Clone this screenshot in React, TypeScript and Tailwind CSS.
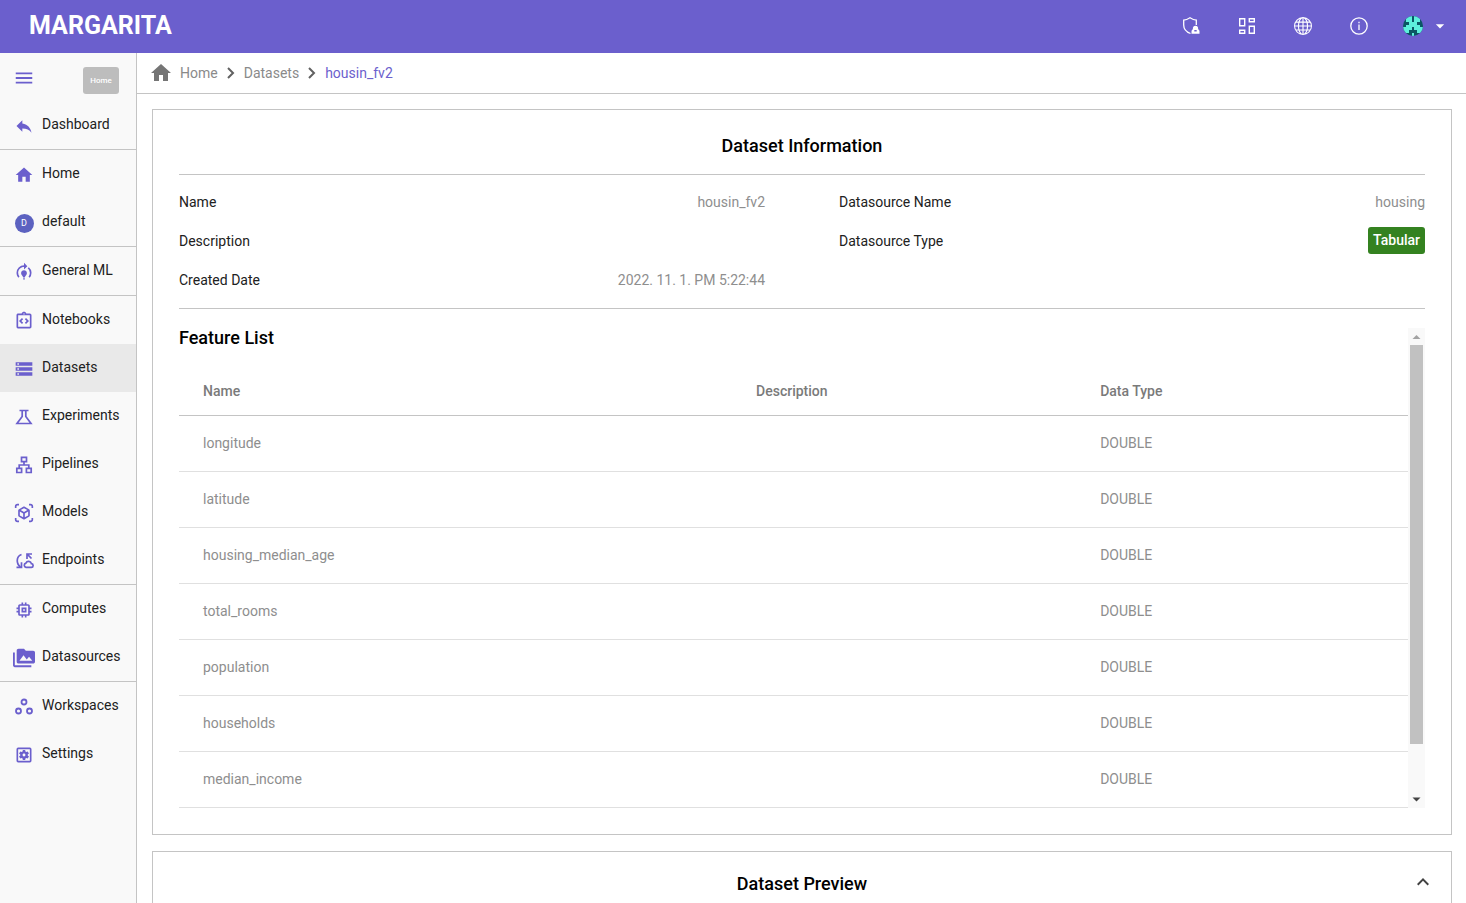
import React from 'react';
import {
  MdHome,
  MdKeyboardArrowUp,
  MdMemory,
  MdMenu,
  MdModelTraining,
  MdOutlineIntegrationInstructions,
  MdOutlineSettingsApplications,
  MdOutlineViewInAr,
  MdPermMedia,
  MdReply,
  MdStorage,
  MdArrowDropDown,
} from 'react-icons/md';
import { BsGlobe } from 'react-icons/bs';

type NavItem = {
  label: string;
  icon: React.ReactNode;
  active?: boolean;
};

const features = [
  'longitude',
  'latitude',
  'housing_median_age',
  'total_rooms',
  'population',
  'households',
  'median_income',
];

function ShieldUserIcon() {
  return (
    <svg viewBox="0 0 20 20" className="w-5 h-5" fill="none" stroke="currentColor" strokeWidth="1.3">
      <path d="M9.500 17.500C5.500 16 2.700 12.800 2.700 9V4.200C5 4 7 3 9 1.700c2 1.300 4 2.300 6.300 2.500V9" />
      <path
        d="M14.500 9.700a2.700 2.700 0 0 1 2.500 3.600c1 .4 1.500 1.200 1.500 2.200v2.200h-8v-2.200c0-1 .5-1.800 1.500-2.200a2.700 2.700 0 0 1 2.500-3.600Z"
        fill="currentColor"
        stroke="none"
      />
      <path d="M13.300 14h2.400v1.500h-2.400z" fill="#6b5fcd" stroke="none" />
    </svg>
  );
}

function DashboardIcon() {
  return (
    <svg viewBox="0 0 18 18" className="w-[18px] h-[18px]" fill="none" stroke="currentColor" strokeWidth="1.400">
      <path d="M1.700 1.700h5v7h-5zM11.300 1.700h5v3h-5zM1.700 13.300h5v3h-5zM11.300 9.300h5v7h-5z" />
    </svg>
  );
}

function InfoIcon() {
  return (
    <svg viewBox="0 0 18 18" className="w-[18px] h-[18px]" fill="none" stroke="currentColor" strokeWidth="1.300">
      <circle cx="9" cy="9" r="8.200" />
      <path d="M9 7.500V13M9 4.800v1.400" />
    </svg>
  );
}

const avatarRows = ['0110110', '0110110', '0011100', '0111110', '1110111', '1100011', '0001000'];

function Avatar() {
  return (
    <svg viewBox="0 0 7 7" className="w-5 h-5 rounded-full bg-[#0b5664]" shapeRendering="crispEdges">
      {avatarRows.map((row, y) =>
        row.split('').map((cell, x) =>
          cell === '1' ? <rect key={`${x}-${y}`} x={x} y={y} width="1" height="1" fill="#5df0dc" /> : null
        )
      )}
    </svg>
  );
}

function FlaskIcon() {
  return (
    <svg viewBox="0 0 20 20" className="w-5 h-5" fill="none" stroke="currentColor" strokeWidth="1.700">
      <path d="M5.500 3.500h9M8.200 3.500v6L3 16.500h14l-5.200-7v-6" />
    </svg>
  );
}

function SitemapIcon() {
  return (
    <svg viewBox="0 0 20 20" className="w-5 h-5" fill="none" stroke="currentColor" strokeWidth="1.700">
      <path d="M7.500 2.300h5v4.400h-5zM2.800 13.300h4.800v4.200H2.800zM12.400 13.300h4.800v4.200h-4.800z" />
      <path d="M10 6.700V10M5.200 13.300V10h9.600v3.300" />
    </svg>
  );
}

function WorkspacesIcon() {
  return (
    <svg viewBox="0 0 20 20" className="w-5 h-5" fill="none" stroke="currentColor" strokeWidth="1.800">
      <circle cx="10" cy="5" r="2.500" />
      <circle cx="4.500" cy="14" r="2.500" />
      <circle cx="15.500" cy="14" r="2.500" />
    </svg>
  );
}

function EndpointIcon() {
  return (
    <svg viewBox="0 0 20 20" className="w-5 h-5" fill="none" stroke="currentColor" strokeWidth="1.700">
      <path d="M7.500 3.500C2 5.500 2 12.500 6.500 16" />
      <path d="M2.500 16.300h5v-5" />
      <path d="M18 3h-5v5M13.200 3.200l4.300 4.300" />
      <path d="M12 16.300h5.200a1.800 1.800 0 0 0 .2-3.600 2.900 2.900 0 0 0-5.500-.6 2.150 2.150 0 0 0 .1 4.200Z" />
    </svg>
  );
}

function Separator() {
  return (
    <svg viewBox="0 0 12 12" className="w-3 h-3 mx-[7px]" fill="none" stroke="#616161" strokeWidth="2">
      <path d="M3 1l5 5-5 5" />
    </svg>
  );
}

const navGroups: NavItem[][] = [
  [{ label: 'Dashboard', icon: <MdReply size={20} /> }],
  [
    { label: 'Home', icon: <MdHome size={20} /> },
    {
      label: 'default',
      icon: (
        <span className="w-[19px] h-[19px] rounded-full bg-[#5c62c0] text-white text-[9px] flex items-center justify-center">
          D
        </span>
      ),
    },
  ],
  [{ label: 'General ML', icon: <MdModelTraining size={20} /> }],
  [
    { label: 'Notebooks', icon: <MdOutlineIntegrationInstructions size={20} /> },
    { label: 'Datasets', icon: <MdStorage size={20} />, active: true },
    { label: 'Experiments', icon: <FlaskIcon /> },
    { label: 'Pipelines', icon: <SitemapIcon /> },
    { label: 'Models', icon: <MdOutlineViewInAr size={20} /> },
    { label: 'Endpoints', icon: <EndpointIcon /> },
  ],
  [
    { label: 'Computes', icon: <MdMemory size={20} /> },
    { label: 'Datasources', icon: <MdPermMedia size={22} /> },
  ],
  [
    { label: 'Workspaces', icon: <WorkspacesIcon /> },
    { label: 'Settings', icon: <MdOutlineSettingsApplications size={20} /> },
  ],
];

function Header() {
  return (
    <header className="h-[53px] shrink-0 bg-[#6b5fcd] text-white flex items-center justify-between pl-[29px] pr-4 pb-0.5">
      <h1 className="text-[25px] leading-8 font-bold">MARGARITA</h1>
      <div className="flex items-center gap-9">
        <button aria-label="Admin" className="w-5 flex justify-center"><ShieldUserIcon /></button>
        <button aria-label="Apps" className="w-5 flex justify-center"><DashboardIcon /></button>
        <button aria-label="Language" className="w-5 flex justify-center"><BsGlobe size={18} /></button>
        <button aria-label="Information" className="w-5 flex justify-center"><InfoIcon /></button>
        <button aria-label="Account" className="flex items-center gap-[7px] -ml-0.5">
          <Avatar />
          <MdArrowDropDown size={20} />
        </button>
      </div>
    </header>
  );
}

function Sidebar() {
  return (
    <aside className="w-[137px] shrink-0 bg-[#f9f9f9] border-r border-[#c4c4c4]">
      <div className="h-12 flex items-start justify-between px-[17px] pt-3.5">
        <button aria-label="Toggle menu" className="-ml-1 text-[#6b5fcd]"><MdMenu size={22} /></button>
        <span className="w-9 h-[27px] rounded-[3px] bg-[#bdbdbd] text-white text-[8px] font-medium flex items-center justify-center">
          Home
        </span>
      </div>
      <nav>
        {navGroups.map((group, i) => (
          <ul key={i} className={i < navGroups.length - 1 ? 'border-b border-[#c4c4c4]' : ''}>
            {group.map((item) => (
              <li key={item.label}>
                <a
                  href="#"
                  className={`h-12 flex items-center pl-[13px] pb-0.5 text-[14px] leading-5 text-[#212121] ${item.active ? 'bg-[#e9e9e9]' : ''}`}
                >
                  <span className="w-[22px] mr-[7px] pt-1 flex justify-center text-[#6b5fcd]">{item.icon}</span>
                  {item.label}
                </a>
              </li>
            ))}
          </ul>
        ))}
      </nav>
    </aside>
  );
}

function Breadcrumb() {
  return (
    <nav aria-label="Breadcrumb" className="h-[41px] border-b border-[#c4c4c4] flex items-center pl-3 text-[14px] text-[#8a8a8a]">
      <MdHome size={24} className="text-[#757575] mr-[7px]" />
      <a href="#">Home</a>
      <Separator />
      <a href="#">Datasets</a>
      <Separator />
      <a href="#" className="text-[#6b5fcd]">housin_fv2</a>
    </nav>
  );
}

function InfoRow({ label, children }: { label: string; children?: React.ReactNode }) {
  return (
    <div className="h-[39px] flex items-center justify-between">
      <dt className="text-[#212121]">{label}</dt>
      <dd className="text-[#8e8e8e]">{children}</dd>
    </div>
  );
}

function DatasetInformation() {
  return (
    <section className="border border-[#c4c4c4] px-[26px] pt-[26px] pb-[26px]">
      <h2 className="text-[18px] leading-5 font-medium text-center text-black pb-[18px] border-b border-[#c4c4c4]">
        Dataset Information
      </h2>
      <div className="grid grid-cols-2 gap-x-[74px] pt-[7px] pb-[9px] text-[14px] leading-5 border-b border-[#c4c4c4]">
        <dl>
          <InfoRow label="Name">housin_fv2</InfoRow>
          <InfoRow label="Description" />
          <InfoRow label="Created Date">2022. 11. 1. PM 5:22:44</InfoRow>
        </dl>
        <dl>
          <InfoRow label="Datasource Name">housing</InfoRow>
          <InfoRow label="Datasource Type">
            <span className="block h-[27px] rounded-[3px] bg-[#348220] px-[5px] leading-[27px] font-medium text-white">
              Tabular
            </span>
          </InfoRow>
        </dl>
      </div>

      <div className="flex mt-[19px]">
        <div className="flex-1">
          <h3 className="text-[18px] leading-5 font-medium text-black">Feature List</h3>
          <table className="w-full mt-5 table-fixed text-left text-[14px] text-[#8e8e8e]">
            <thead>
              <tr className="h-[47px] border-b border-[#c4c4c4] text-[#7a7a7a]">
                <th className="w-[45%] pl-6 font-medium">Name</th>
                <th className="w-[28%] pl-6 font-medium">Description</th>
                <th className="pl-6 font-medium">Data Type</th>
              </tr>
            </thead>
            <tbody>
              {features.map((name) => (
                <tr key={name} className="h-14 border-b border-[#e0e0e0]">
                  <td className="pl-6">{name}</td>
                  <td className="pl-6" />
                  <td className="pl-6">DOUBLE</td>
                </tr>
              ))}
            </tbody>
          </table>
        </div>
        {/* scrollbar */}
        <div className="w-[17px] shrink-0 bg-[#f9f9f9] flex flex-col items-center justify-between">
          <svg viewBox="0 0 17 17" className="w-[17px] h-[17px] shrink-0">
            <path d="M4.500 11h8l-4-4z" fill="#a3a3a3" />
          </svg>
          <div className="w-[13px] h-[399px] bg-[#c1c1c1] mb-auto" />
          <svg viewBox="0 0 17 17" className="w-[17px] h-[17px] shrink-0">
            <path d="M4.500 6.500h8l-4 4z" fill="#444444" />
          </svg>
        </div>
      </div>
    </section>
  );
}

function DatasetPreview() {
  return (
    <section className="border border-[#c4c4c4] px-4 pt-[22px] h-20 flex items-start">
      <h2 className="flex-1 pl-6 text-[18px] leading-5 font-medium text-center text-black">Dataset Preview</h2>
      <button aria-label="Collapse" className="-mt-1 text-[#424242]">
        <MdKeyboardArrowUp size={24} />
      </button>
    </section>
  );
}

export default function App() {
  return (
    <div className="h-screen overflow-hidden flex flex-col bg-white font-['Roboto',sans-serif]">
      <Header />
      <div className="flex flex-1 min-h-0">
        <Sidebar />
        <main className="flex-1 min-w-0 overflow-hidden">
          <Breadcrumb />
          <div className="flex flex-col gap-4 pl-[15px] pr-3.5 pt-[15px]">
            <DatasetInformation />
            <DatasetPreview />
          </div>
        </main>
      </div>
    </div>
  );
}
